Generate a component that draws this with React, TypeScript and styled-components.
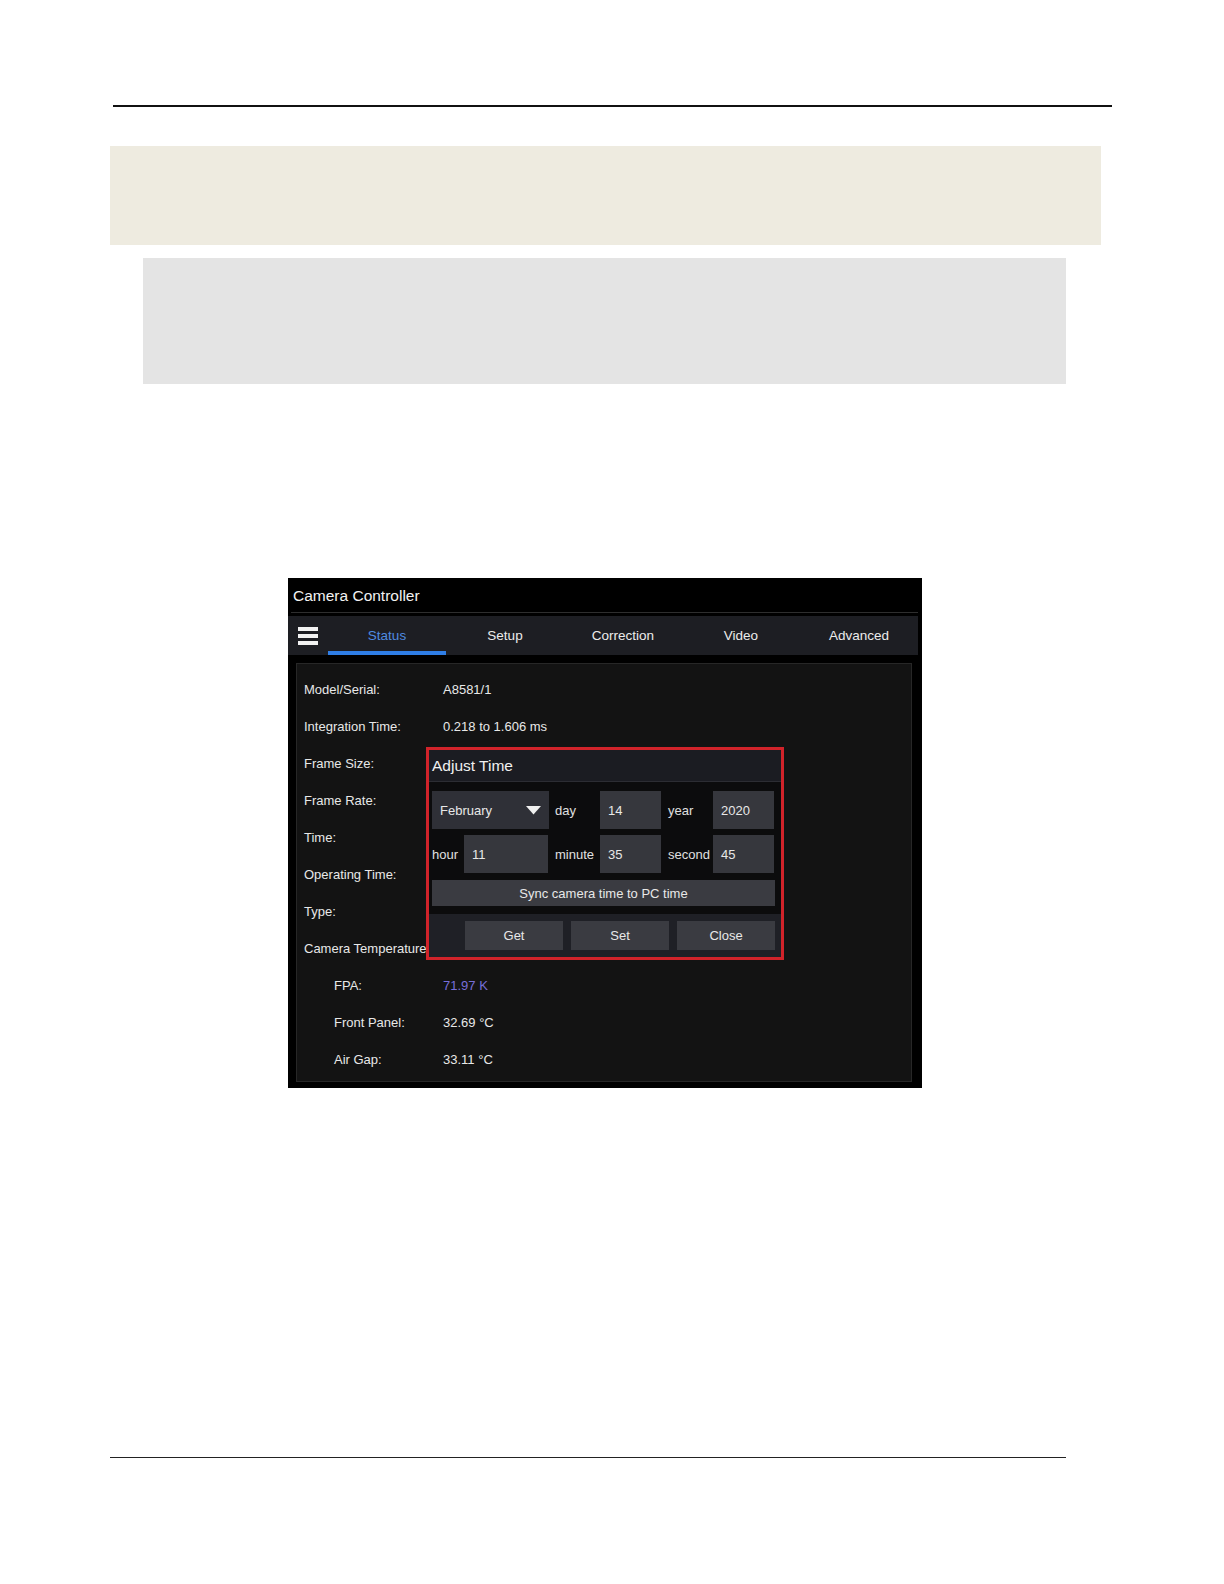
import React from "react";
import styled, { createGlobalStyle } from "styled-components";

const GlobalStyle = createGlobalStyle`
  html, body {
    margin: 0;
    padding: 0;
    background: #ffffff;
  }
  * {
    box-sizing: border-box;
  }
`;

const tabs = ["Status", "Setup", "Correction", "Video", "Advanced"];

const infoRows = [
  { label: "Model/Serial:", value: "A8581/1" },
  { label: "Integration Time:", value: "0.218 to 1.606 ms" },
  { label: "Frame Size:", value: "" },
  { label: "Frame Rate:", value: "" },
  { label: "Time:", value: "" },
  { label: "Operating Time:", value: "" },
  { label: "Type:", value: "" },
  { label: "Camera Temperature", value: "" },
  { label: "FPA:", value: "71.97 K", indent: true, accent: true },
  { label: "Front Panel:", value: "32.69 °C", indent: true },
  { label: "Air Gap:", value: "33.11 °C", indent: true },
];

export default function App() {
  return (
    <>
      <GlobalStyle />
      <Page>
        <TopRule />
        <NoteBox />
        <ExampleBox />
        <Window>
          <TitleBar>Camera Controller</TitleBar>
          <TitleDivider />
          <TabBar>
            <MenuButton>
              <svg width="20" height="18" viewBox="0 0 20 18">
                <rect x="0" y="0" width="20" height="4" fill="#f2f2f2" />
                <rect x="0" y="7" width="20" height="4" fill="#f2f2f2" />
                <rect x="0" y="14" width="20" height="4" fill="#f2f2f2" />
              </svg>
            </MenuButton>
            {tabs.map((t, i) => (
              <Tab key={t} $active={i === 0}>
                {t}
              </Tab>
            ))}
          </TabBar>
          <Panel>
            {infoRows.map((r) => (
              <InfoRow key={r.label}>
                <InfoLabel $indent={!!r.indent}>{r.label}</InfoLabel>
                <InfoValue $accent={!!r.accent}>{r.value}</InfoValue>
              </InfoRow>
            ))}
            <Dialog>
              <DialogTitle>Adjust Time</DialogTitle>
              <DialogBody>
                <FieldRow>
                  <Select>
                    <span>February</span>
                    <svg width="15" height="9" viewBox="0 0 15 9">
                      <path d="M0 0 L15 0 L7.5 8.5 Z" fill="#f0f0f0" />
                    </svg>
                  </Select>
                  <FieldLabel $w={51} $pad={6}>day</FieldLabel>
                  <Field $w={61}>14</Field>
                  <FieldLabel $w={52} $pad={7}>year</FieldLabel>
                  <Field $w={61}>2020</Field>
                </FieldRow>
                <FieldRow>
                  <FieldLabel $w={32} $pad={0}>hour</FieldLabel>
                  <Field $w={84}>11</Field>
                  <FieldLabel $w={52} $pad={7}>minute</FieldLabel>
                  <Field $w={61}>35</Field>
                  <FieldLabel $w={52} $pad={7}>second</FieldLabel>
                  <Field $w={61}>45</Field>
                </FieldRow>
                <SyncButton>Sync camera time to PC time</SyncButton>
              </DialogBody>
              <DialogFooter>
                <FooterButton>Get</FooterButton>
                <FooterButton>Set</FooterButton>
                <FooterButton>Close</FooterButton>
              </DialogFooter>
            </Dialog>
          </Panel>
        </Window>
        <BottomRule />
      </Page>
    </>
  );
}

const Page = styled.div`
  width: 1224px;
  padding-top: 105px;
  display: flex;
  flex-direction: column;
  font-family: "Liberation Sans", Arial, sans-serif;
`;

const TopRule = styled.div`
  margin-left: 113px;
  width: 999px;
  height: 2px;
  background: #111;
`;

const NoteBox = styled.div`
  margin: 39px 0 0 110px;
  width: 991px;
  height: 99px;
  background: #eeebe0;
`;

const ExampleBox = styled.div`
  margin: 13px 0 0 143px;
  width: 923px;
  height: 126px;
  background: #e4e4e4;
`;

const Window = styled.div`
  margin: 194px 0 0 288px;
  width: 634px;
  height: 510px;
  background: #000;
  padding-right: 4px;
  display: flex;
  flex-direction: column;
  color: #e6e6e6;
`;

const TitleBar = styled.div`
  height: 34px;
  padding: 1px 0 0 5px;
  display: flex;
  align-items: center;
  font-size: 15.5px;
  color: #f2f2f2;
`;

const TitleDivider = styled.div`
  margin-left: 3px;
  height: 1px;
  background: #2e2e2e;
`;

const TabBar = styled.div`
  margin-top: 3px;
  height: 39px;
  display: flex;
  background: #1d1e23;
`;

const MenuButton = styled.div`
  width: 40px;
  display: flex;
  align-items: center;
  padding-left: 10px;
`;

const Tab = styled.div<{ $active: boolean }>`
  width: 118px;
  display: flex;
  align-items: center;
  justify-content: center;
  font-size: 13.5px;
  color: ${(p) => (p.$active ? "#4f8be0" : "#ececec")};
  box-shadow: ${(p) => (p.$active ? "inset 0 -4px 0 #2f7ee6" : "none")};
`;

const Panel = styled.div`
  position: relative;
  margin: 8px 0 0 8px;
  width: 616px;
  height: 419px;
  background: #131313;
  border: 1px solid #272727;
  padding: 7px 0 0 7px;
`;

const InfoRow = styled.div`
  height: 37px;
  display: flex;
  align-items: center;
  font-size: 13px;
`;

const InfoLabel = styled.div<{ $indent: boolean }>`
  width: 139px;
  padding-left: ${(p) => (p.$indent ? 30 : 0)}px;
  white-space: nowrap;
  color: #e8e8e8;
`;

const InfoValue = styled.div<{ $accent: boolean }>`
  color: ${(p) => (p.$accent ? "#776ed8" : "#e8e8e8")};
`;

const Dialog = styled.div`
  position: absolute;
  left: 129px;
  top: 83px;
  width: 358px;
  height: 213px;
  border: 3px solid #d1232a;
  background: #0c0c0d;
  display: flex;
  flex-direction: column;
  font-size: 13px;
`;

const DialogTitle = styled.div`
  height: 32px;
  padding-left: 3px;
  display: flex;
  align-items: center;
  font-size: 15.5px;
  color: #f0f0f0;
  background: #1b1c22;
  border-bottom: 1px solid #2c2d33;
`;

const DialogBody = styled.div`
  padding: 9px 6px 0 3px;
  display: flex;
  flex-direction: column;
  gap: 6px;
`;

const FieldRow = styled.div`
  height: 38px;
  display: flex;
`;

const Select = styled.div`
  width: 117px;
  background: #2f3037;
  display: flex;
  align-items: center;
  justify-content: space-between;
  padding: 0 8px;
  color: #e8e8e8;
`;

const FieldLabel = styled.div<{ $w: number; $pad: number }>`
  width: ${(p) => p.$w}px;
  padding-left: ${(p) => p.$pad}px;
  display: flex;
  align-items: center;
  color: #e0e0e0;
`;

const Field = styled.div<{ $w: number }>`
  width: ${(p) => p.$w}px;
  background: #36373d;
  display: flex;
  align-items: center;
  padding-left: 8px;
  color: #e8e8e8;
`;

const SyncButton = styled.div`
  margin-top: 1px;
  width: 343px;
  height: 26px;
  background: #3a3b41;
  display: flex;
  align-items: center;
  justify-content: center;
  color: #e8e8e8;
`;

const DialogFooter = styled.div`
  margin-top: 8px;
  height: 43px;
  background: #1f2026;
  display: flex;
  align-items: center;
  justify-content: flex-end;
  gap: 8px;
  padding-right: 6px;
`;

const FooterButton = styled.div`
  width: 98px;
  height: 29px;
  background: #3a3b41;
  display: flex;
  align-items: center;
  justify-content: center;
  color: #e8e8e8;
`;

const BottomRule = styled.div`
  margin: 369px 0 0 110px;
  width: 956px;
  height: 1px;
  background: #222;
`;
